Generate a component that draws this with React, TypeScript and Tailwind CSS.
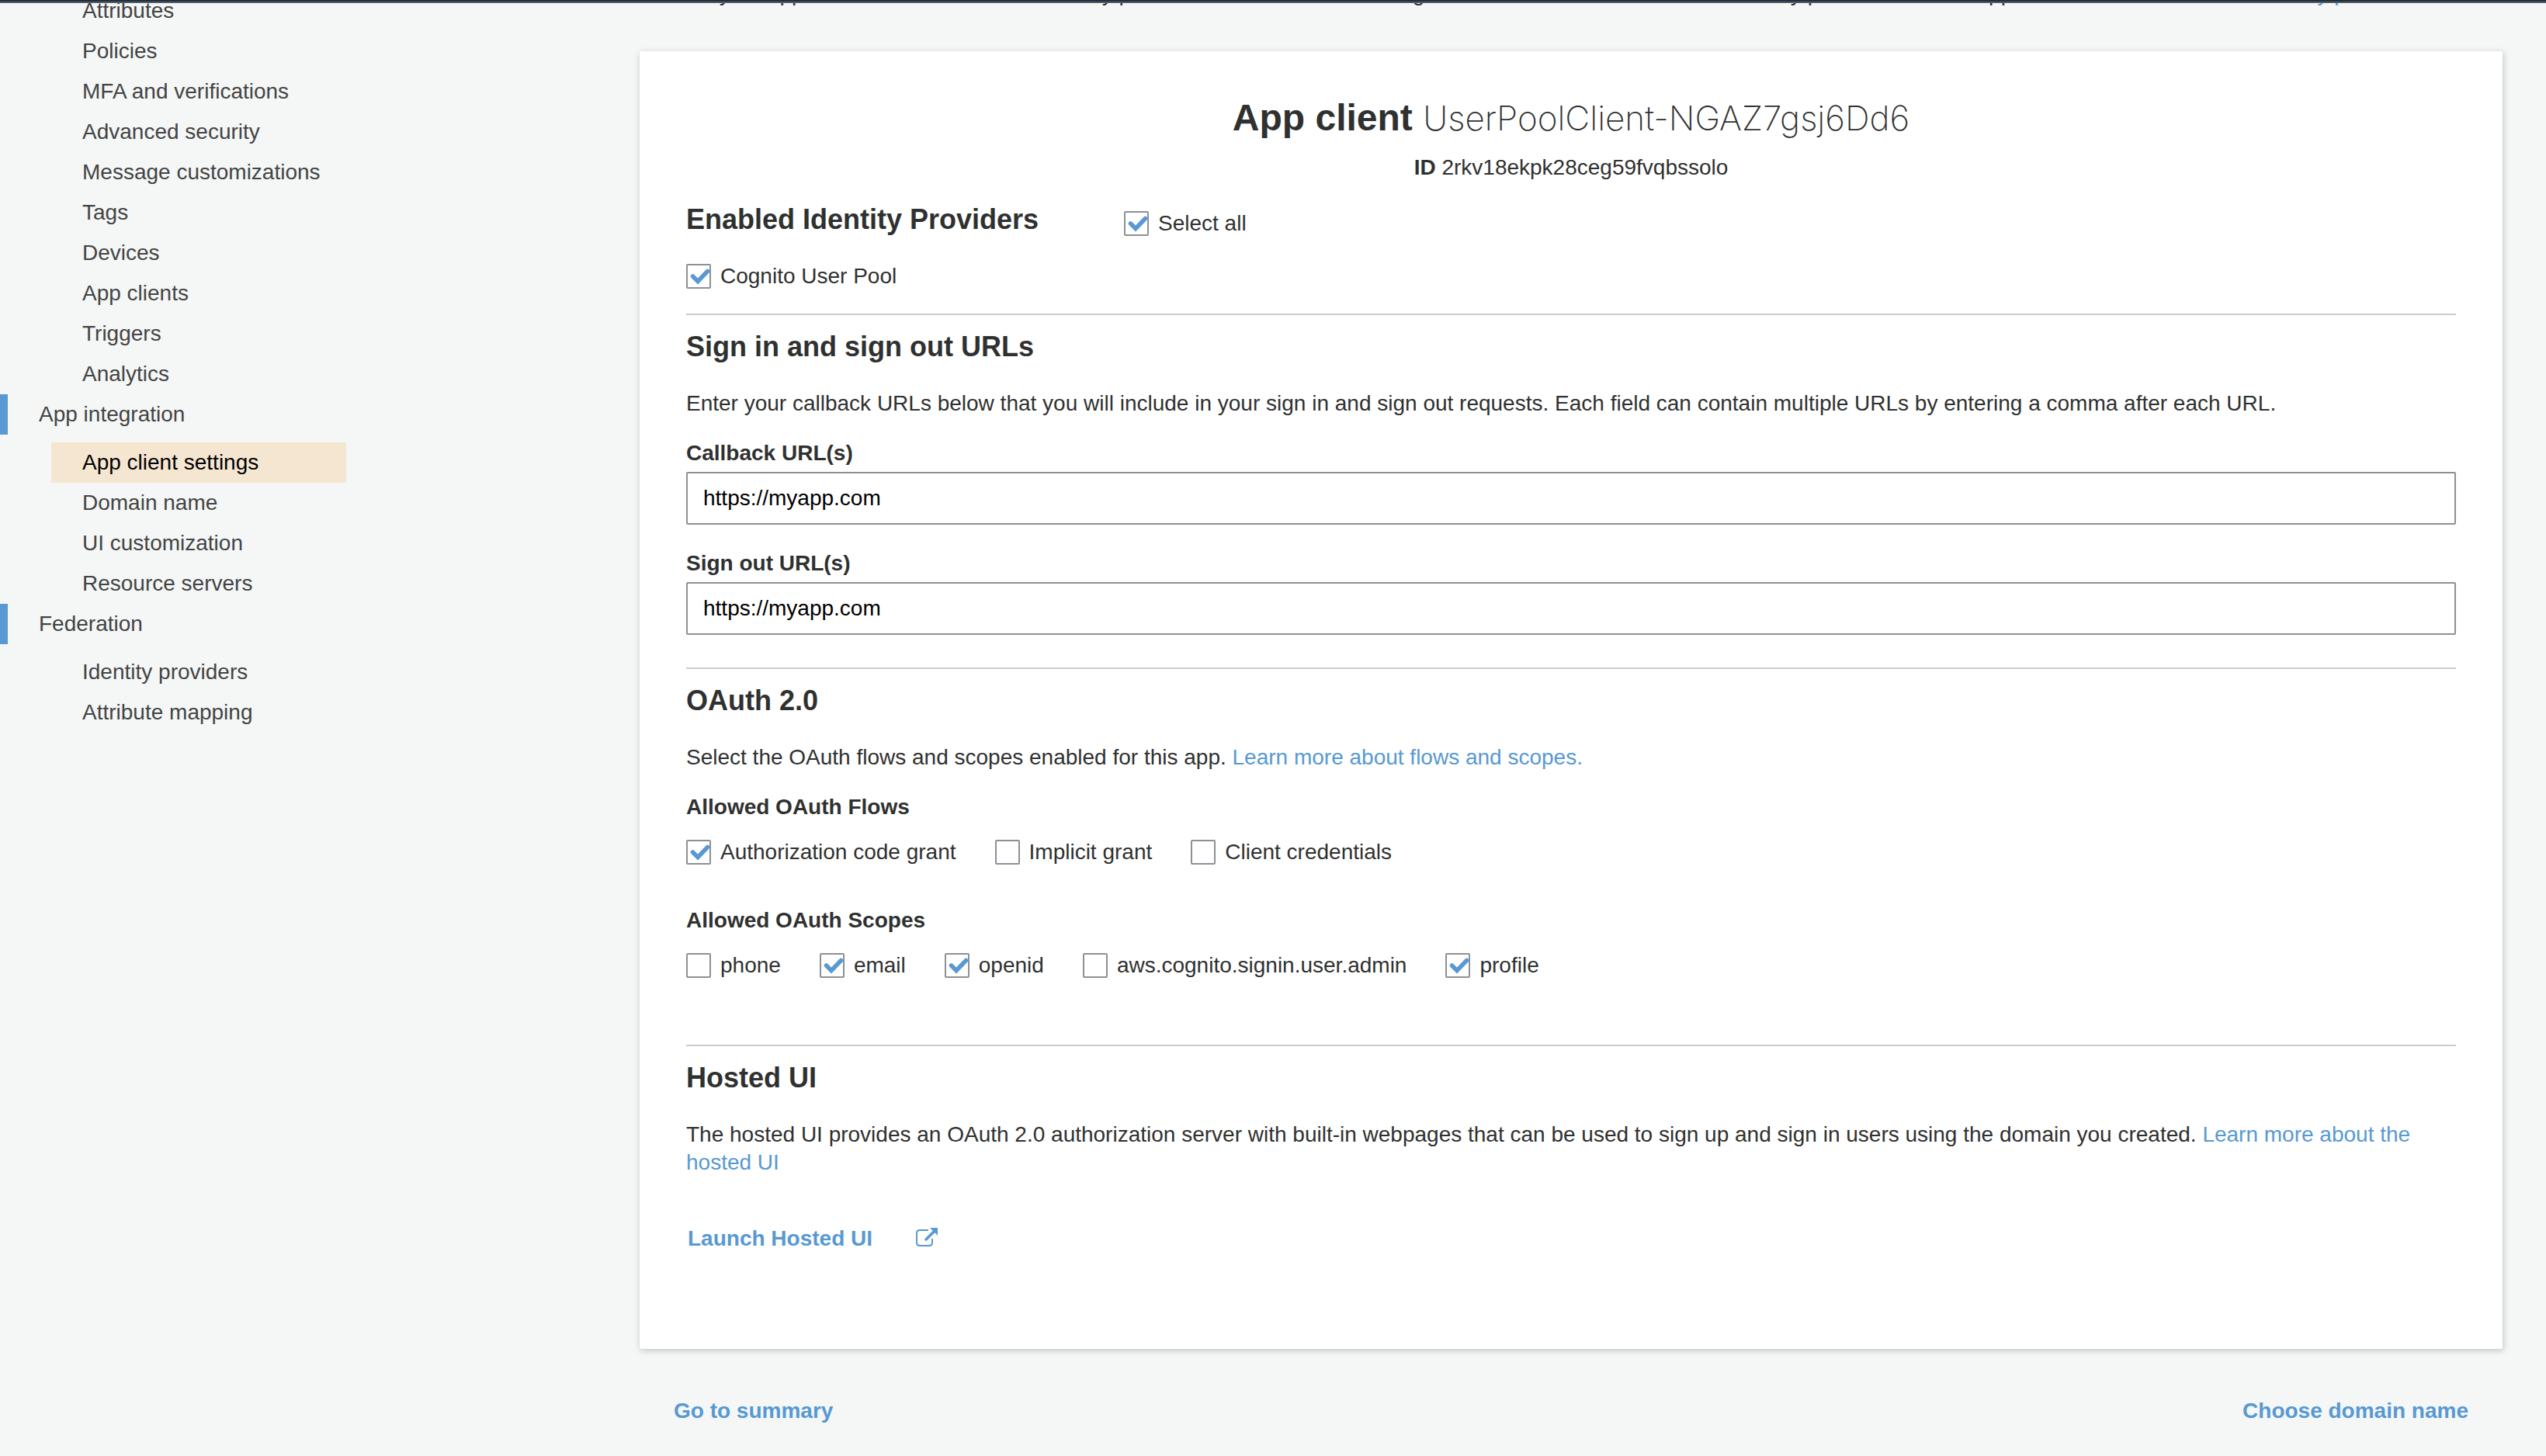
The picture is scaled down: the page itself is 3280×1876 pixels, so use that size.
import { useState } from "react";

const generalItems = [
  "Attributes",
  "Policies",
  "MFA and verifications",
  "Advanced security",
  "Message customizations",
  "Tags",
  "Devices",
  "App clients",
  "Triggers",
  "Analytics",
];
const integrationItems = ["App client settings", "Domain name", "UI customization", "Resource servers"];
const federationItems = ["Identity providers", "Attribute mapping"];

function NavList({ items, current }: { items: string[]; current?: string }) {
  return (
    <ul className="ml-[66px] w-[380px]">
      {items.map((item) => (
        <li key={item}>
          <a
            href="#"
            aria-current={item === current ? "page" : undefined}
            className={
              item === current
                ? "block bg-[#f5e6d2] pl-10 leading-[52px] text-black"
                : "block pl-10 leading-[52px]"
            }
          >
            {item}
          </a>
        </li>
      ))}
    </ul>
  );
}

function NavHeading({ children }: { children: string }) {
  return (
    <a href="#" className="block border-l-[10px] border-[#5899d2] pl-10 leading-[52px]">
      {children}
    </a>
  );
}

function Check({ label, on = false }: { label: string; on?: boolean }) {
  const [checked, setChecked] = useState(on);
  return (
    <label className="flex items-center gap-3">
      <span className="relative flex size-8">
        <input
          type="checkbox"
          checked={checked}
          onChange={(e) => setChecked(e.target.checked)}
          className="size-8 appearance-none rounded-xs border-2 border-[#8c9196] bg-white"
        />
        {checked && (
          <svg viewBox="0 0 32 32" className="pointer-events-none absolute inset-0 size-8" aria-hidden="true">
            <path
              d="M8.500 16 L15 22.500 L27.500 9.500"
              fill="none"
              stroke="#5899d2"
              strokeWidth="5.500"
              strokeLinecap="round"
            />
          </svg>
        )}
      </span>
      {label}
    </label>
  );
}

function UrlField({ id, label }: { id: string; label: string }) {
  return (
    <div>
      <label htmlFor={id} className="block font-bold">
        {label}
      </label>
      <input
        id={id}
        type="text"
        defaultValue="https://myapp.com"
        className="mt-1.5 block h-[68px] w-full rounded-xs border-2 border-[#8c9196] bg-white px-5 text-black"
      />
    </div>
  );
}

function SectionTitle({ children }: { children: string }) {
  return <h2 className="pb-0.5 text-[36px] leading-[42px] font-bold">{children}</h2>;
}

export default function App() {
  return (
    <div className="h-screen overflow-hidden bg-[#f4f7f6] font-['Liberation_Sans',Arial,sans-serif] text-[28px] leading-9 text-[#2f3130]">
      <header className="relative z-10 h-1 border-b-2 border-[#545b64] bg-[#232f3e]" />
      <div className="-mt-[30px] flex pr-14">
        <nav className="w-[824px] shrink-0 pt-3.5 text-[#444]">
          <NavList items={generalItems} />
          <NavHeading>App integration</NavHeading>
          <div className="pt-2.5">
            <NavList items={integrationItems} current="App client settings" />
          </div>
          <NavHeading>Federation</NavHeading>
          <div className="pt-2.5">
            <NavList items={federationItems} />
          </div>
        </nav>

        <main className="min-w-0 flex-1">
          <p>
            Each of your app clients can use different identity providers and OAuth 2.0 settings. You must enable at
            least one identity provider for each app client.{" "}
            <a href="#" className="text-[#5899d2]">
              Learn more about identity providers.
            </a>
          </p>

          <div className="mt-14 rounded-xs bg-white px-[60px] pt-14 pb-[124px] shadow-[1px_2px_8px_rgba(0,0,0,0.22)]">
            <h1 className="text-center text-[48px] leading-[60px] font-bold">
              App client <span className="font-['Inter'] text-[44px] font-extralight">UserPoolClient-NGAZ7gsj6Dd6</span>
            </h1>
            <p className="mt-4 text-center">
              <b>ID</b> 2rkv18ekpk28ceg59fvqbssolo
            </p>

            <section className="mt-7 pb-[30px]">
              <div className="flex items-end">
                <div className="w-[564px]">
                  <SectionTitle>Enabled Identity Providers</SectionTitle>
                </div>
                <Check label="Select all" on />
              </div>
              <div className="mt-8 flex">
                <Check label="Cognito User Pool" on />
              </div>
            </section>

            <section className="border-t-2 border-[#ccc] pt-5 pb-[42px]">
              <SectionTitle>Sign in and sign out URLs</SectionTitle>
              <p className="mt-8 mb-7">
                Enter your callback URLs below that you will include in your sign in and sign out requests. Each field
                can contain multiple URLs by entering a comma after each URL.
              </p>
              <div className="flex flex-col gap-8">
                <UrlField id="callback" label="Callback URL(s)" />
                <UrlField id="signout" label="Sign out URL(s)" />
              </div>
            </section>

            <section className="border-t-2 border-[#ccc] pt-5 pb-[84px]">
              <SectionTitle>OAuth 2.0</SectionTitle>
              <p className="mt-8 mb-7">
                Select the OAuth flows and scopes enabled for this app.{" "}
                <a href="#" className="text-[#5899d2]">
                  Learn more about flows and scopes.
                </a>
              </p>
              <fieldset>
                <legend className="mb-[22px] font-bold">Allowed OAuth Flows</legend>
                <div className="flex gap-[50px]">
                  <Check label="Authorization code grant" on />
                  <Check label="Implicit grant" />
                  <Check label="Client credentials" />
                </div>
              </fieldset>
              <fieldset className="mt-[52px]">
                <legend className="mb-[22px] font-bold">Allowed OAuth Scopes</legend>
                <div className="flex gap-[50px]">
                  <Check label="phone" />
                  <Check label="email" on />
                  <Check label="openid" on />
                  <Check label="aws.cognito.signin.user.admin" />
                  <Check label="profile" on />
                </div>
              </fieldset>
            </section>

            <section className="border-t-2 border-[#ccc] pt-5">
              <SectionTitle>Hosted UI</SectionTitle>
              <p className="mt-8">
                The hosted UI provides an OAuth 2.0 authorization server with built-in webpages that can be used to
                sign up and sign in users using the domain you created.{" "}
                <a href="#" className="text-[#5899d2]">
                  Learn more about the hosted UI
                </a>
              </p>
              <a href="#" className="mt-[62px] ml-0.5 flex w-fit items-center gap-14 font-bold text-[#5899d2]">
                Launch Hosted UI
                <svg viewBox="0 0 28 28" className="size-7" fill="none" stroke="currentColor" aria-hidden="true">
                  <path d="M16 3H5Q1 3 1 7V19Q1 23 5 23H17Q21 23 21 19V14" strokeWidth="2" />
                  <path d="M13 15L23 5" strokeWidth="3.500" strokeLinecap="round" />
                  <path d="M18 0H28V10Z" fill="currentColor" stroke="none" />
                </svg>
              </a>
            </section>
          </div>

          <div className="mt-[62px] flex justify-between px-11 font-bold text-[#5899d2]">
            <a href="#">Go to summary</a>
            <a href="#">Choose domain name</a>
          </div>
        </main>
      </div>
    </div>
  );
}
